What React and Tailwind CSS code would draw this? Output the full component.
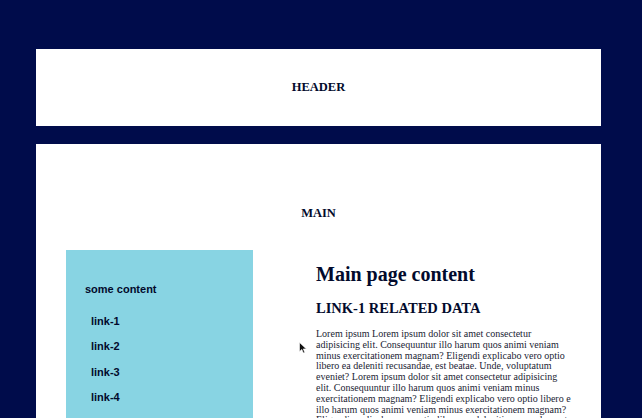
import React from "react";

const links = ["link-1", "link-2", "link-3", "link-4"];

const lorem =
  "Lorem ipsum Lorem ipsum dolor sit amet consectetur adipisicing elit. Consequuntur illo harum quos animi veniam minus exercitationem magnam? Eligendi explicabo vero optio libero ea deleniti recusandae, est beatae. Unde, voluptatum eveniet? Lorem ipsum dolor sit amet consectetur adipisicing elit. Consequuntur illo harum quos animi veniam minus exercitationem magnam? Eligendi explicabo vero optio libero e illo harum quos animi veniam minus exercitationem magnam? Eligendi explicabo vero optio libero ea deleniti recusandae, est beatae.";

const App = () => {
  return (
    <div className="relative h-[418px] overflow-hidden bg-[#000c4b] pl-[36px] pt-[49px] text-[#020a2c] font-['Liberation_Serif',serif]">
      {/* Header */}
      <header className="flex h-[77px] w-[565px] items-center justify-center bg-white">
        <h3 className="text-[12.5px] font-bold">HEADER</h3>
      </header>

      {/* Main */}
      <main className="mt-[18px] w-[565px] bg-white pt-[62px] pb-10">
        <h3 className="text-center text-[12.5px] leading-[15px] font-bold">MAIN</h3>

        <div className="mt-[29px] flex pl-[30px]">
          {/* Sidebar */}
          <aside className="h-[200px] w-[187px] bg-[#88d4e3] pl-[19px] pt-[33px] font-['Liberation_Sans',sans-serif]">
            <p className="text-[11px] leading-[13px] font-bold">some content</p>
            <ul className="mt-[19px] flex flex-col gap-[12.4px] pl-[6px]">
              {links.map((l) => (
                <li key={l} className="text-[11px] leading-[13px] font-bold">
                  {l}
                </li>
              ))}
            </ul>
          </aside>

          {/* Content */}
          <section className="ml-[63px] w-[255px] pt-[13px]">
            <h1 className="text-[20px] leading-[23px] font-bold">Main page content</h1>
            <h2 className="mt-[14px] text-[14.5px] leading-[17px] font-bold">LINK-1 RELATED DATA</h2>
            <p className="mt-[12px] text-[10px] leading-[10.8px] text-[#1a1d33]">{lorem}</p>
          </section>
        </div>
      </main>

      {/* mouse pointer */}
      <svg className="absolute left-[299px] top-[342px]" width="8" height="12" viewBox="0 0 8 12">
        <path d="M0.5 0.5 L0.5 9.5 L2.8 7.4 L4.4 11 L5.8 10.4 L4.3 6.9 L7.3 6.9 Z" fill="#111" stroke="#fff" strokeWidth="0.6" />
      </svg>
    </div>
  );
};

export default App;
